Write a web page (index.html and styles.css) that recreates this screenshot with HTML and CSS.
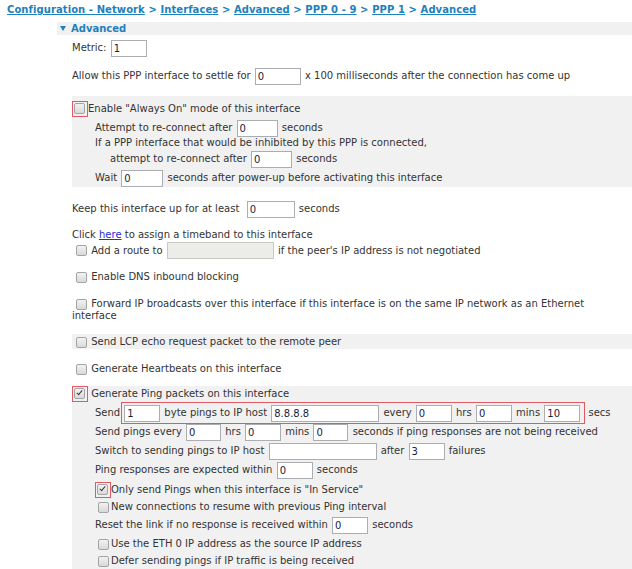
FILE: index.html
```html
<!DOCTYPE html>
<html>
<head>
<meta charset="utf-8">
<link rel="stylesheet" href="styles.css">
</head>
<body>
<div class="crumbs"><a href="#">Configuration - Network</a> &gt; <a href="#">Interfaces</a> &gt; <a href="#">Advanced</a> &gt; <a href="#">PPP 0 - 9</a> &gt; <a href="#">PPP 1</a> &gt; <a href="#">Advanced</a></div>
<div class="section">
  <div class="sec-head"><span class="tri"></span>Advanced</div>
  <div class="body">
    <div class="line mt4">Metric: <input class="in w36" value="1"></div>
    <div class="line mt11">Allow this PPP interface to settle for <input class="in w46" value="0"> x 100 milliseconds after the connection has come up</div>

    <div class="gray mt12 pad">
      <div class="line h18"><span class="hl"><span class="cb"></span></span>Enable "Always On" mode of this interface</div>
      <div class="line mt1 ind">Attempt to re-connect after <input class="in w41" value="0"> seconds</div>
      <div class="line h14 ind">If a PPP interface that would be inhibited by this PPP is connected,</div>
      <div class="line ind2">attempt to re-connect after <input class="in w41" value="0"> seconds</div>
      <div class="line mt2 ind">Wait <input class="in w42" value="0"> seconds after power-up before activating this interface</div>
    </div>

    <div class="line mt13">Keep this interface up for at least&nbsp; <input class="in w48" value="0"> seconds</div>
    <div class="line mt11 h14">Click <a class="link" href="#">here</a> to assign a timeband to this interface</div>
    <div class="line h15"><span class="cb sm"></span> Add a route to <input class="in w107 dis" disabled value=""> if the peer's IP address is not negotiated</div>
    <div class="line mt12 h16"><span class="cb sm"></span> Enable DNS inbound blocking</div>
    <div class="wrap mt12"><span class="cb sm"></span> Forward IP broadcasts over this interface if this interface is on the same IP network as an Ethernet interface</div>
    <div class="gray mt12"><div class="line h15"><span class="cb sm"></span> Send LCP echo request packet to the remote peer</div></div>
    <div class="line mt12 h16"><span class="cb sm"></span> Generate Heartbeats on this interface</div>

    <div class="gray mt9 padb">
      <div class="line h16"><span class="hl"><span class="cb on"></span></span> Generate Ping packets on this interface</div>
      <div class="line h20 ind">Send<span class="redgrp"><input class="in w36" value="1"> byte pings to IP host <input class="in w108" value="8.8.8.8"> every <input class="in w36" value="0"> hrs <input class="in w36" value="0"> mins <input class="in w36" value="10"></span> secs</div>
      <div class="line mt1 ind">Send pings every <input class="in w35" value="0"> hrs <input class="in w36" value="0"> mins <input class="in w35" value="0"> seconds if ping responses are not being received</div>
      <div class="line mt2 ind">Switch to sending pings to IP host <input class="in w108" value=""> after <input class="in w36" value="3"> failures</div>
      <div class="line mt2 ind">Ping responses are expected within <input class="in w36" value="0"> seconds</div>
      <div class="line mt3 ind"><span class="hl"><span class="cb on"></span></span>Only send Pings when this interface is "In Service"</div>
      <div class="line mt1 h16 ind"><span class="cb sm2"></span>New connections to resume with previous Ping interval</div>
      <div class="line mt1 ind">Reset the link if no response is received within <input class="in w36" value="0"> seconds</div>
      <div class="line mt3 h16 ind"><span class="cb sm2"></span>Use the ETH 0 IP address as the source IP address</div>
      <div class="line mt1 h16 ind"><span class="cb sm2"></span>Defer sending pings if IP traffic is being received</div>
    </div>
  </div>
</div>
</body>
</html>
```

FILE: styles.css
```css
html, body {
  margin: 0;
  padding: 0;
  background: #ffffff;
}
body {
  font-family: "DejaVu Sans", Verdana, sans-serif;
  font-size: 10px;
  color: #333333;
  width: 632px;
  overflow: hidden;
}
.crumbs {
  height: 18px;
  line-height: 19px;
  padding-left: 7px;
  font-weight: bold;
  letter-spacing: 0.08px;
  color: #1e80bd;
  white-space: nowrap;
}
.crumbs a {
  color: #1e80bd;
  text-decoration: underline;
}
.section {
  margin-left: 57px;
}
.sec-head {
  margin-top: 4px;
  height: 13px;
  line-height: 13px;
  background: #f1f1f1;
  color: #1e80bd;
  font-weight: bold;
  display: flex;
  align-items: center;
}
.tri {
  width: 0;
  height: 0;
  border-left: 3.5px solid transparent;
  border-right: 3.5px solid transparent;
  border-top: 5px solid #1e80bd;
  margin-left: 3px;
  margin-right: 5px;
}
.body {
  padding-left: 15px;
}
.line {
  height: 17px;
  line-height: 17px;
  white-space: nowrap;
}
.wrap {
  line-height: 12px;
  height: 24px;
  padding-top: 1px;
  padding-right: 24px;
}
.h14 { height: 14px; line-height: 14px; }
.h15 { height: 15px; line-height: 15px; }
.h16 { height: 16px; line-height: 16px; }
.h18 { height: 18px; line-height: 18px; }
.h20 { height: 20px; line-height: 20px; }
.mt1 { margin-top: 1px; }
.mt2 { margin-top: 2px; }
.mt3 { margin-top: 3px; }
.mt4 { margin-top: 4px; }
.mt9 { margin-top: 9px; }
.mt11 { margin-top: 11px; }
.mt12 { margin-top: 12px; }
.mt13 { margin-top: 13px; }
.ind { padding-left: 23px; }
.ind2 { padding-left: 38px; }
.gray {
  background: #f1f1f1;
}
.pad { padding: 4px 0 1px; }
.padb { padding-bottom: 6px; }
.in {
  box-sizing: border-box;
  height: 17px;
  border: 1px solid #abadb3;
  background: #ffffff;
  font-family: "DejaVu Sans", Verdana, sans-serif;
  font-size: 10px;
  color: #1b1b3a;
  padding: 0 2px;
  margin: 0 1px;
  vertical-align: middle;
  outline: none;
}
.dis {
  background: #ecece9;
  border-color: #c9c9c5;
}
.w35 { width: 35px; }
.w36 { width: 36px; }
.w41 { width: 41px; }
.w42 { width: 42px; }
.w46 { width: 46px; }
.w48 { width: 48px; }
.w107 { width: 107px; }
.w108 { width: 108px; }
.link {
  color: #2b2bd8;
  text-decoration: underline;
}
.cb {
  display: inline-block;
  box-sizing: border-box;
  width: 11px;
  height: 11px;
  border: 1px solid #a4a4a4;
  border-radius: 2px;
  background: linear-gradient(#f2f2f2, #d9d9d9);
  vertical-align: middle;
  position: relative;
}
.cb.on::after {
  content: "";
  position: absolute;
  left: 3px;
  top: 0px;
  width: 2px;
  height: 5px;
  border-right: 1.6px solid #3a3a3a;
  border-bottom: 1.6px solid #3a3a3a;
  transform: rotate(40deg);
}
.hl {
  display: inline-block;
  box-sizing: border-box;
  width: 16px;
  height: 16px;
  border: 1px solid #e05a64;
  padding: 1px 0 0 1px;
  vertical-align: middle;
  line-height: 0;
}
.sm {
  margin-left: 4px;
  margin-right: 1px;
}
.sm2 {
  margin-left: 3px;
  margin-right: 2px;
}
.redgrp {
  display: inline-block;
  box-sizing: border-box;
  height: 22px;
  line-height: 20px;
  border: 1px solid #e05a64;
  padding: 0 3px 0 1px;
  margin-left: 1px;
  vertical-align: middle;
}
```
